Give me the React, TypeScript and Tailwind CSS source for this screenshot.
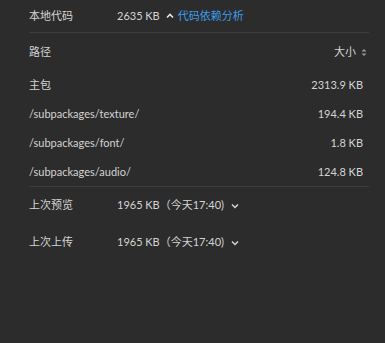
import React from "react";

const font = {
  fontFamily: 'Lato, "Noto Sans CJK SC", sans-serif',
};

const ChevronUp = () => (
  <svg width="8" height="6" viewBox="0 0 8 6" className="text-[#e6e6e6]">
    <path d="M1 4.5 L4 1.5 L7 4.5" fill="none" stroke="currentColor" strokeWidth="1.6" />
  </svg>
);

const ChevronDown = () => (
  <svg width="8" height="6" viewBox="0 0 8 6" className="text-[#d6d6d6]">
    <path d="M1 1.5 L4 4.5 L7 1.5" fill="none" stroke="currentColor" strokeWidth="1.5" />
  </svg>
);

const SortIcon = () => (
  <svg width="6" height="9" viewBox="0 0 6 9" className="text-[#9a9a9a]">
    <path d="M0.5 3.5 L3 1 L5.5 3.5 Z" fill="currentColor" />
    <path d="M0.5 5.5 L3 8 L5.5 5.5 Z" fill="currentColor" />
  </svg>
);

const packages = [
  { path: "主包", size: "2313.9 KB" },
  { path: "/subpackages/texture/", size: "194.4 KB" },
  { path: "/subpackages/font/", size: "1.8 KB" },
  { path: "/subpackages/audio/", size: "124.8 KB" },
];

const history = [
  { label: "上次预览", value: "1965 KB（今天17:40)" },
  { label: "上次上传", value: "1965 KB（今天17:40)" },
];

export default function App() {
  return (
    <div
      className="w-[385px] h-[343px] bg-[#2c2c2c] text-[11px] text-[#d4d4d4] px-[29px] pr-[16px]"
      style={font}
    >
      <div className="flex items-center h-[33px] border-b border-[#3d3d3d]">
        <span className="w-[88px]">本地代码</span>
        <span>2635 KB</span>
        <span className="ml-[6px] mr-[4px] flex items-center">
          <ChevronUp />
        </span>
        <span className="text-[#3f9ce8]">代码依赖分析</span>
      </div>

      <div className="flex items-center justify-between h-[38px] pr-[2px]">
        <span>路径</span>
        <span className="flex items-center gap-[5px]">
          大小
          <SortIcon />
        </span>
      </div>

      <div className="flex flex-col pr-[6px]">
        {packages.map((p) => (
          <div key={p.path} className="flex items-center justify-between h-[29px]">
            <span>{p.path}</span>
            <span>{p.size}</span>
          </div>
        ))}
      </div>

      <div className="border-t border-[#3d3d3d] -mt-[1px]">
        {history.map((h) => (
          <div key={h.label} className="flex items-center h-[37px]">
            <span className="w-[88px]">{h.label}</span>
            <span>{h.value}</span>
            <span className="ml-[7px] flex items-center">
              <ChevronDown />
            </span>
          </div>
        ))}
      </div>
    </div>
  );
}
